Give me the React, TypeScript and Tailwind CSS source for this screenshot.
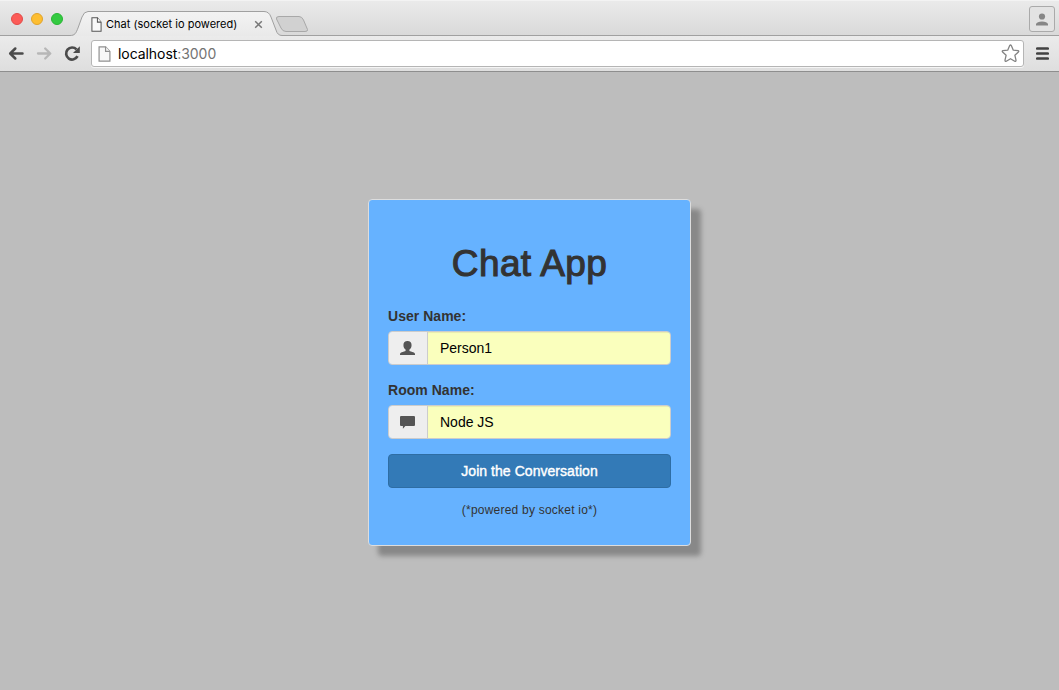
import type { ReactNode } from "react";

function PageIcon({ color, className }: { color: string; className: string }) {
  return (
    <svg className={className} viewBox="0 0 12 15" preserveAspectRatio="none" fill="#f8f8f8" stroke={color} strokeWidth="1.1">
      <path d="M1 .8h6l4 4.3v9.1H1z" />
      <path d="M7 .8v4.3h4" />
    </svg>
  );
}

function TabStrip() {
  return (
    <div className="relative flex h-9 shrink-0 items-start bg-linear-to-b from-[#ebebeb] to-[#d9d9d9] font-['Inter',sans-serif]">
      <svg className="absolute inset-0 h-9 w-full" viewBox="0 0 1059 36" fill="none">
        <defs>
          <linearGradient id="tab" x1="0" y1="0" x2="0" y2="1">
            <stop stopColor="#f3f3f3" />
            <stop offset="1" stopColor="#e9e9e9" />
          </linearGradient>
        </defs>
        <path d="M0 .5H1059" stroke="#f3f3f3" />
        <path d="M72 36C76 35 76.500 32.500 78 28L82 17Q84 11.500 88 11.500H264Q269 11.500 271 17L276 30Q277.500 35 282 36Z" fill="url(#tab)" />
        <path d="M0 35.500H70C75 35.500 76 33 78 28L82 17Q84 11.500 88 11.500H264Q269 11.500 271 17L276 30Q277.500 35.500 282 35.500H1059" stroke="#a0a0a0" />
        <path d="M279 16.500H299Q302 16.500 303.500 20L307.500 29.500Q308 31.500 305 31.500H286Q282.500 31.500 281 28L276.500 19Q275.800 16.500 279 16.500Z" fill="#d1d1d1" stroke="#a8a8a8" />
      </svg>
      <div className="relative flex h-9 w-[72px] items-center gap-2 pb-0.5 pl-[11px] pt-1">
        <span className="size-3 rounded-full border border-[#e24b48] bg-[#fc5b57]" />
        <span className="size-3 rounded-full border border-[#e0a32c] bg-[#fdbe31]" />
        <span className="size-3 rounded-full border border-[#28b634] bg-[#34ca41]" />
      </div>
      <div className="relative flex h-6 flex-1 items-center self-end pl-[19px]">
        <PageIcon color="#555" className="h-[15px] w-[11px]" />
        <span className="ml-1 w-[148px] whitespace-nowrap text-[11px] tracking-[0.02px] text-black">Chat (socket io powered)</span>
        <svg className="h-[9px] w-[9px]" viewBox="0 0 9 9" stroke="#777" strokeWidth="1.500"><path d="m1.200 1.200 6.600 6.600m0-6.600L1.200 7.800" /></svg>
      </div>
      <div className="relative mr-1 mt-1.5 flex h-[26px] w-[26px] items-center justify-center rounded-[3px] border border-[#aaa] bg-[#e3e3e3]">
        <svg className="h-[13px] w-3" viewBox="0 0 12 13" fill="#868686">
          <circle cx="6" cy="3.500" r="3.100" />
          <path d="M0 12.500V11Q1 8.500 6 8.500T12 11v1.500z" />
        </svg>
      </div>
    </div>
  );
}

function Toolbar() {
  return (
    <div className="flex h-9 shrink-0 items-center border-b border-[#8e8e8e] bg-linear-to-b from-[#ebebeb] to-[#dedede] font-['Inter',sans-serif]">
      <svg className="ml-2 h-4 w-4" viewBox="0 0 16 16" fill="none" stroke="#4b4b4b" strokeWidth="2.500" strokeLinecap="round" strokeLinejoin="round"><path d="M14.500 7.500H2.500M7.300 2.500 2.200 7.500l5.100 5" /></svg>
      <svg className="ml-3 h-4 w-4" viewBox="0 0 16 16" fill="none" stroke="#b7b7b7" strokeWidth="2.300" strokeLinecap="round" strokeLinejoin="round"><path d="M2 7.500h12M9.200 2.500l5.100 5-5.100 5" /></svg>
      <svg className="ml-3 h-4 w-4" viewBox="0 0 16 16" fill="none" stroke="#4b4b4b" strokeWidth="2.700">
        <path d="M13.500 10.200A6 6 0 1 1 12.500 3.400" />
        <path d="M15.800.3v6.700H9z" fill="#4b4b4b" stroke="none" />
      </svg>
      <div className="ml-[11px] flex h-[27px] flex-1 items-center rounded-[3px] border border-[#b5b5b5] bg-white px-[7px] shadow-[0_1px_0_#f5f5f5]">
        <PageIcon color="#909090" className="-ml-px h-4 w-[13px]" />
        <span className="ml-[7px] flex-1 text-[14px] leading-none tracking-[-0.06px] text-black">
          localhost<span className="text-[#737373]">:3000</span>
        </span>
        <svg className="-mr-[4px] h-[19px] w-[19px]" viewBox="0 0 19 19" fill="none" stroke="#838383" strokeWidth="1.300" strokeLinejoin="round">
          <path d="M8.700 1.600Q9.500.4 10.300 1.600L12.300 6.200 17 6.700Q18.300 7 17.400 8L13.900 11.300 15 16.200Q15 17.700 13.700 17.200L9.500 14.700 5.300 17.200Q4 17.700 4 16.200L5.100 11.300 1.600 8Q.7 7 2 6.700L6.700 6.200z" />
        </svg>
      </div>
      <svg className="ml-3 mr-[10px] h-[13px] w-[13px]" viewBox="0 0 13 13" stroke="#424242" strokeWidth="2.700" strokeLinecap="round"><path d="M1.300 1.500h10.400M1.300 6.500h10.400M1.300 11.500h10.400" /></svg>
    </div>
  );
}

function Field({ label, value, icon }: { label: string; value: string; icon: ReactNode }) {
  return (
    <div className="mb-[15px]">
      <div className="mb-[5px] h-5 text-[14px] font-bold leading-5 tracking-[0.03px]">{label}</div>
      <div className="flex h-[34px] overflow-hidden rounded border border-[#ccc]">
        <div className="flex w-[39px] items-center justify-center border-r border-[#ccc] bg-[#eee]">{icon}</div>
        <div className="flex flex-1 items-center bg-[#faffbd] pl-3 text-[14px] text-black shadow-[inset_0_1px_1px_rgba(0,0,0,0.075)]">{value}</div>
      </div>
    </div>
  );
}

export default function App() {
  return (
    <div className="flex h-[690px] w-full flex-col overflow-hidden bg-[#bdbdbd]">
      <TabStrip />
      <Toolbar />
      <main className="flex flex-1 justify-center pt-[127px] font-['Liberation_Sans',sans-serif] text-[#333]">
        <section className="h-[347px] w-[323px] rounded border border-[#ddd] bg-[#66b2ff] px-[19px] pt-11 shadow-[10px_10px_5px_#888]">
          <h1 className="mb-[22px] h-10 text-center text-[37px] leading-10 tracking-[0.4px] [-webkit-text-stroke:1.100px_#333]">Chat App</h1>
          <Field
            label="User Name:"
            value="Person1"
            icon={<svg className="-ml-px h-[14px] w-[15px]" viewBox="0 0 14 14" preserveAspectRatio="none" fill="#555"><path d="M7 0C4.600 0 3.200 1.500 3.200 4c0 2.100.7 3.700 2 4.600v1.400L1 11.600Q0 12.200 0 13v1h14v-1q0-.8-1-1.400L8.800 10V8.600c1.300-.9 2-2.500 2-4.600C10.800 1.500 9.400 0 7 0z" /></svg>}
          />
          <Field
            label="Room Name:"
            value="Node JS"
            icon={<svg className="-ml-px h-[14px] w-[15px]" viewBox="0 0 14 14" preserveAspectRatio="none" fill="#555"><path d="M1 1h12a1 1 0 0 1 1 1v8a1 1 0 0 1-1 1H5L2.700 13.800V11H1a1 1 0 0 1-1-1V2a1 1 0 0 1 1-1z" /></svg>}
          />
          <button className="block h-[34px] w-full rounded border border-[#2e6da4] bg-[#337ab7] text-[14px] leading-5 tracking-[0.05px] text-white [-webkit-text-stroke:0.400px_white]">Join the Conversation</button>
          <p className="mt-3 text-center text-[12px] leading-5 tracking-[0.22px]">(*powered by socket io*)</p>
        </section>
      </main>
    </div>
  );
}
